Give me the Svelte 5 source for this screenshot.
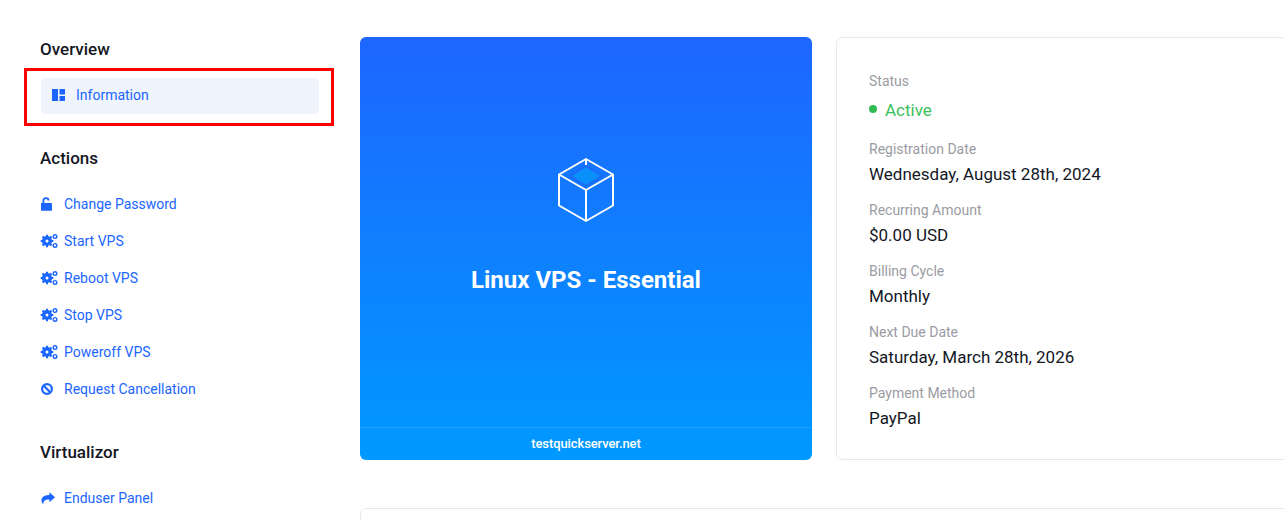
<script>
  const gear = 'gears';
  const actions = [
    { label: 'Change Password', icon: 'unlock' },
    { label: 'Start VPS', icon: gear },
    { label: 'Reboot VPS', icon: gear },
    { label: 'Stop VPS', icon: gear },
    { label: 'Poweroff VPS', icon: gear },
    { label: 'Request Cancellation', icon: 'ban' }
  ];
  const details = [
    ['Registration Date', 'Wednesday, August 28th, 2024'],
    ['Recurring Amount', '$0.00 USD'],
    ['Billing Cycle', 'Monthly'],
    ['Next Due Date', 'Saturday, March 28th, 2026'],
    ['Payment Method', 'PayPal']
  ];
</script>

{#snippet icon(name)}
  <svg class="ico" viewBox="0 0 18 14" aria-hidden="true">
    {#if name === 'unlock'}
      <path d="M1 6h10.200c.5 0 .8.4.8.8v6.100c0 .5-.3.9-.8.9H1.800c-.5 0-.8-.4-.8-.9z" fill="currentColor"/>
      <path d="M3.400 6.500V3.800a2.600 2.600 0 0 1 5.200-.3" fill="none" stroke="currentColor" stroke-width="1.800"/>
    {:else if name === 'gears'}
      <g fill="none" stroke="currentColor">
        <circle cx="7" cy="7" r="3.700" stroke-width="2.800"/>
        <path d="M7 .7v12.600M.7 7h12.600M2.500 2.500l9 9M11.500 2.500l-9 9" stroke-width="2"/>
        <circle cx="15" cy="2.600" r="1.800" stroke-width="1.400"/>
        <circle cx="15" cy="11.400" r="1.800" stroke-width="1.400"/>
      </g>
      <circle cx="7" cy="7" r="1.500" fill="#fff"/>
    {:else if name === 'ban'}
      <circle cx="7" cy="7" r="4.900" fill="none" stroke="currentColor" stroke-width="2.200"/>
      <path d="M3.500 3.500l7 7" stroke="currentColor" stroke-width="2.200"/>
    {:else if name === 'share'}
      <path d="M9.400 1.200 15 6.300l-5.600 5V8.400C5.400 8.400 3.400 9.500 3.200 13.400 0 9.800.8 4.200 9.400 4.100z" fill="currentColor"/>
    {/if}
  </svg>
{/snippet}

<div class="page">
  <aside class="sidebar">
    <h3 class="first">Overview</h3>
    <div class="highlight">
      <a class="active" href="#info">
        <svg class="ico-info" viewBox="0 0 13 12" aria-hidden="true">
          <path d="M0 0h6v12H0zM7.500 0H13v5.500H7.500zM7.500 7H13v5H7.500z" fill="currentColor"/>
        </svg>
        <span>Information</span>
      </a>
    </div>

    <h3 class="actions">Actions</h3>
    <ul>
      {#each actions as a}
        <li><a href="#a">{@render icon(a.icon)}<span>{a.label}</span></a></li>
      {/each}
    </ul>

    <h3 class="virt">Virtualizor</h3>
    <ul>
      <li><a href="#p">{@render icon('share')}<span>Enduser Panel</span></a></li>
    </ul>
  </aside>

  <main>
    <div class="top">
      <section class="product">
        <div class="hero">
          <svg class="cube" viewBox="0 0 56 64" aria-hidden="true">
            <path d="M28 8 44 18 28 28 12 18z" fill="#0a8ffb" stroke="#1a6bf8" stroke-width="2"/>
            <path d="M28 1 55 16.500V47.500L28 63 1 47.500V16.500zM1 16.500 28 32 55 16.500M28 32V63M28 1V7" fill="none" stroke="#fff" stroke-width="2" stroke-linejoin="round"/>
          </svg>
          <h1>Linux VPS - Essential</h1>
        </div>
        <div class="domain">testquickserver.net</div>
      </section>

      <section class="info">
        <div class="label">Status</div>
        <div class="status"><i></i>Active</div>
        {#each details as [k, v]}
          <div class="label">{k}</div>
          <div class="value">{v}</div>
        {/each}
      </section>
    </div>
    <section class="next"></section>
  </main>
</div>

<style>
  :global(body) {
    margin: 0;
    background: #fff;
    overflow: hidden;
  }
  .page {
    display: flex;
    width: 1288px;
    height: 520px;
    overflow: hidden;
    font-family: Roboto, "Liberation Sans", sans-serif;
    font-size: 14px;
    color: #14171f;
  }
  .sidebar {
    flex: 0 0 360px;
    box-sizing: border-box;
    padding-left: 40px;
  }
  h3 {
    margin: 0;
    font-size: 17px;
    line-height: 20px;
    font-weight: 500;
  }
  .first { margin-top: 39px; }
  .actions { margin-top: 22px; }
  .virt { margin-top: 35px; }
  .highlight {
    box-sizing: border-box;
    width: 310px;
    height: 58px;
    margin: 9px 0 0 -16px;
    border: 3px solid #f00;
    padding: 7px 12px 0 14px;
  }
  .active {
    box-sizing: border-box;
    height: 36px;
    padding: 0 0 2px 11px;
    background: #f0f4fd;
    border-radius: 4px;
    gap: 11px;
  }
  .ico-info {
    width: 13px;
    height: 12px;
    flex: none;
  }
  ul {
    list-style: none;
    margin: 17px 0 0;
    padding: 0;
  }
  li {
    height: 37px;
    display: flex;
    align-items: center;
  }
  a {
    display: flex;
    align-items: center;
    gap: 6px;
    color: #1c66ff;
    text-decoration: none;
    line-height: 20px;
  }
  .ico {
    width: 18px;
    height: 14px;
    flex: none;
  }
  main {
    flex: 0 0 928px;
    padding-top: 37px;
  }
  .top {
    display: flex;
    gap: 24px;
    height: 423px;
  }
  .product {
    flex: 0 0 452px;
    display: flex;
    flex-direction: column;
    border-radius: 6px;
    overflow: hidden;
    color: #fff;
    background: linear-gradient(180deg, #1e66ff 0%, #0099ff 100%);
  }
  .hero {
    flex: 1;
    display: flex;
    flex-direction: column;
    align-items: center;
    padding-top: 121px;
  }
  .cube {
    width: 56px;
    height: 64px;
    display: block;
  }
  h1 {
    margin: 40px 0 0;
    font-size: 24px;
    line-height: 36px;
    font-weight: 700;
  }
  .domain {
    height: 32px;
    line-height: 32px;
    text-align: center;
    font-size: 13px;
    font-weight: 500;
    letter-spacing: -0.1px;
    border-top: 1px solid rgba(255, 255, 255, 0.12);
  }
  .info {
    flex: 1;
    box-sizing: border-box;
    border: 1px solid #e8e9ec;
    border-radius: 6px;
    padding: 33px 32px 0;
  }
  .label {
    font-size: 14px;
    line-height: 20px;
    color: #9a9ca3;
  }
  .value {
    font-size: 17px;
    line-height: 24px;
    margin: 3px 0 14px;
  }
  .status {
    display: flex;
    align-items: center;
    gap: 8px;
    height: 24px;
    margin: 7px 0 17px;
    font-size: 17px;
    color: #3abf5c;
  }
  .status i {
    width: 8px;
    height: 8px;
    border-radius: 50%;
    background: #31bd55;
    margin-top: -2px;
  }
  .next {
    margin-top: 48px;
    height: 80px;
    border: 1px solid #e8e9ec;
    border-radius: 6px;
    box-sizing: border-box;
  }
</style>
